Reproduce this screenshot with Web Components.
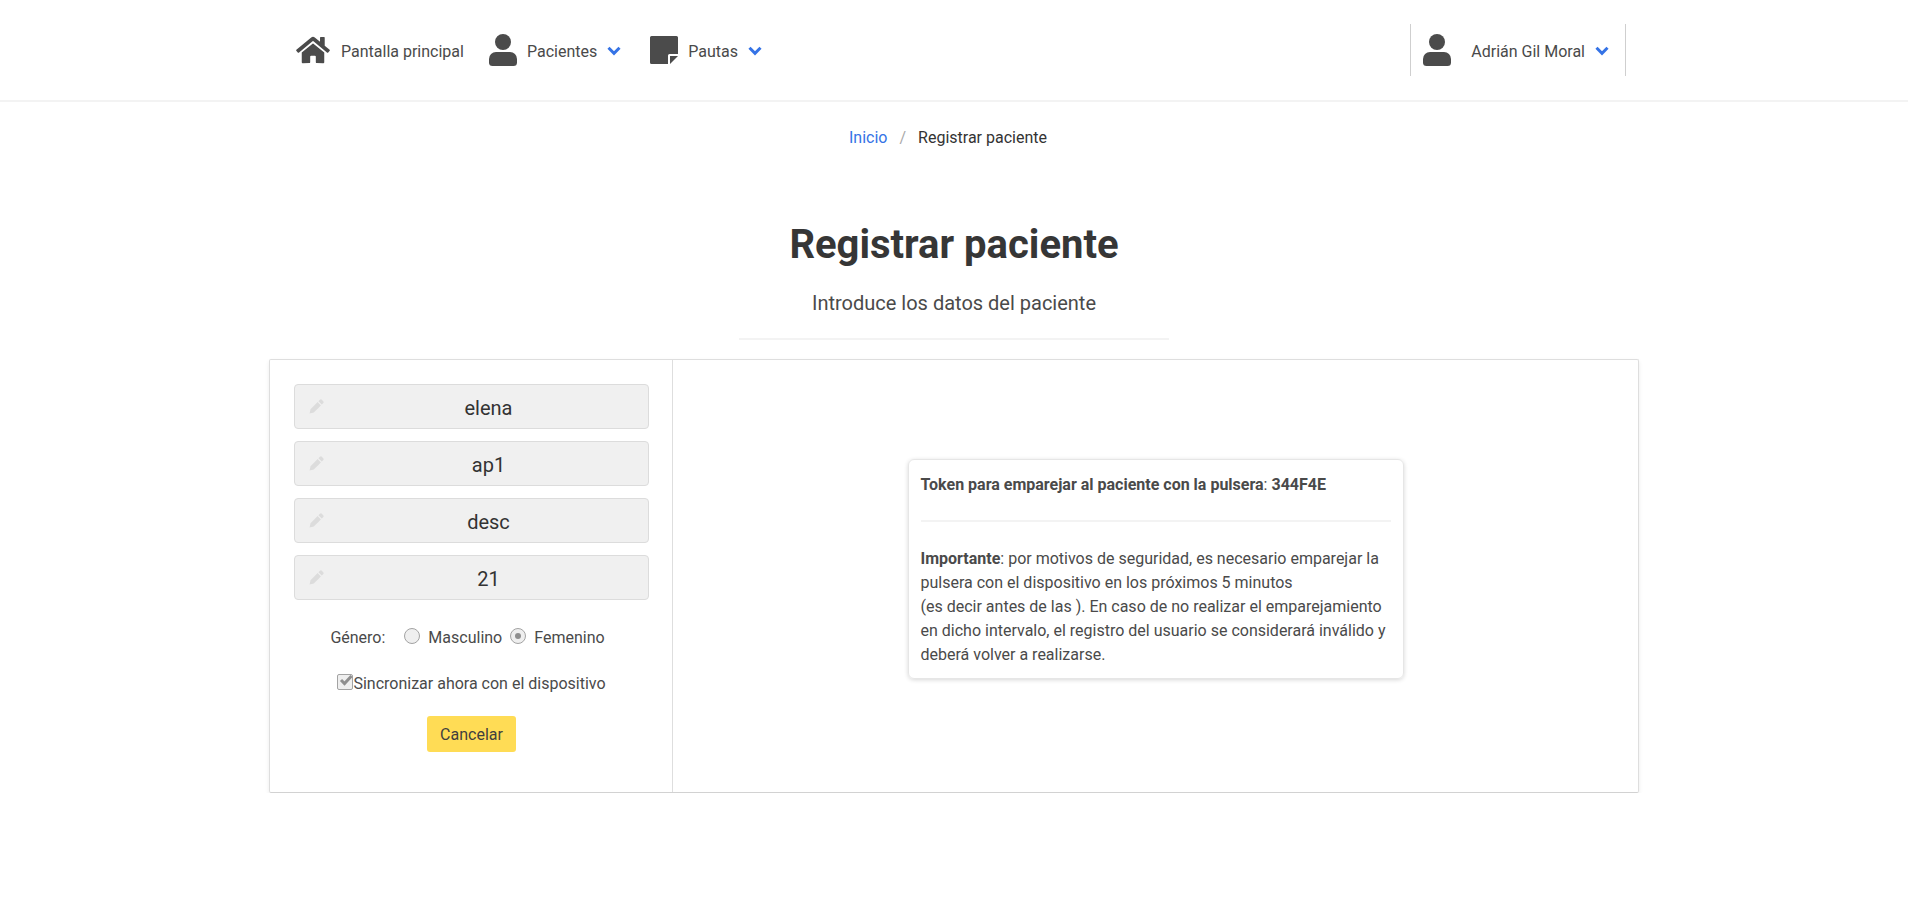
<!DOCTYPE html>
<html>
<head>
<meta charset="utf-8">
<title>Registrar paciente</title>
<style>
  html, body { margin: 0; padding: 0; background: #fff; font-family: Roboto, sans-serif; color: #3c3c3c; }
</style>
</head>
<body>
<app-nav>
  <nav-item icon="home">Pantalla principal</nav-item>
  <nav-item icon="user" menu>Pacientes</nav-item>
  <nav-item icon="note" menu>Pautas</nav-item>
  <nav-item slot="right" icon="user" menu wide>Adrián Gil Moral</nav-item>
</app-nav>
<bread-crumb></bread-crumb>
<page-title head="Registrar paciente" sub="Introduce los datos del paciente"></page-title>
<register-card>
  <patient-form slot="left"></patient-form>
  <token-info slot="right"></token-info>
</register-card>

<script>
  const ICONS = {
    home: `<svg width="36" height="30" viewBox="0 0 576 512"><path fill="#4b4b4b" d="M280.4 148.3 96 300.1V464a16 16 0 0 0 16 16l112-.3a16 16 0 0 0 16-16V368a16 16 0 0 1 16-16h64a16 16 0 0 1 16 16v95.6a16 16 0 0 0 16 16.1l112 .3a16 16 0 0 0 16-16V300L295.700 148.300a12.200 12.200 0 0 0-15.300 0zM571.600 251.500 488 182.600V44a12 12 0 0 0-12-12h-56a12 12 0 0 0-12 12v72.600L318.500 43a48 48 0 0 0-61 0L4.300 251.500a12 12 0 0 0-1.600 16.900l25.500 31A12 12 0 0 0 45.200 301l235.200-193.700a12.200 12.200 0 0 1 15.300 0L530.900 301a12 12 0 0 0 16.900-1.600l25.500-31a12 12 0 0 0-1.700-16.900z"/></svg>`,
    user: `<svg width="28" height="32" viewBox="0 0 28 32"><circle cx="14" cy="8" r="8" fill="#4b4b4b"/><path fill="#4b4b4b" d="M7 18h14a7 7 0 0 1 7 7v3.500a3.500 3.500 0 0 1-3.500 3.500h-21A3.500 3.500 0 0 1 0 28.500V25a7 7 0 0 1 7-7z"/></svg>`,
    note: `<svg width="28" height="28" viewBox="0 0 28 28"><path fill="#4b4b4b" d="M1.500 0h25A1.500 1.500 0 0 1 28 1.500V18H19.500A1.500 1.500 0 0 0 18 19.500V28H1.500A1.500 1.500 0 0 1 0 26.500v-25A1.500 1.500 0 0 1 1.500 0z"/><path fill="#4b4b4b" d="M20 20h8l-8 8z"/></svg>`
  }

  class AppNav extends HTMLElement {
    constructor() {
      super()
      this.attachShadow({ mode: 'open' })
      this.shadowRoot.innerHTML = `
      <style>
        :host { display: block; height: 100px; border-bottom: 2px solid #f3f3f3; }
        .bar { height: 100px; display: flex; align-items: center; justify-content: space-between; padding: 0 282px 0 295px; }
        .left { display: flex; align-items: center; gap: 25px; }
        .right { display: flex; align-items: center; height: 52px; border-left: 1px solid #cfcfcf; border-right: 1px solid #cfcfcf; padding: 0 16px 0 12px; }
      </style>
      <div class="bar">
        <div class="left"><slot></slot></div>
        <div class="right"><slot name="right"></slot></div>
      </div>`
    }
  }

  class NavItem extends HTMLElement {
    constructor() {
      super()
      this.attachShadow({ mode: 'open' })
      const menu = this.hasAttribute('menu')
      this.shadowRoot.innerHTML = `
      <style>
        :host { display: flex; align-items: center; font-size: 16px; color: #4a4a4a; white-space: nowrap; }
        .icon { display: flex; margin-right: 10px; }
        :host([wide]) .icon { margin-right: 20px; }
        .label { padding-top: 2px; }
        .chev { display: flex; margin: 2px 4px 0 10px; }
        :host([wide]) .chev { margin-right: 0; }
      </style>
      <span class="icon">${ICONS[this.getAttribute('icon')]}</span>
      <span class="label"><slot></slot></span>
      ${menu ? `<span class="chev"><svg width="14" height="10" viewBox="0 0 14 10"><path d="M1.500 1.800 7 7.300 12.500 1.800" fill="none" stroke="#3573e6" stroke-width="3"/></svg></span>` : ''}`
    }
  }

  class BreadCrumb extends HTMLElement {
    constructor() {
      super()
      this.attachShadow({ mode: 'open' })
      this.shadowRoot.innerHTML = `
      <style>
        :host { display: flex; justify-content: center; align-items: center; height: 24px; margin-top: 23px; padding-right: 12px; font-size: 16px; color: #333; }
        a { color: #3573e6; text-decoration: none; }
        i { font-style: normal; color: #aaa; margin: 0 12px; }
      </style>
      <a>Inicio</a><i>/</i><span>Registrar paciente</span>`
    }
  }

  class PageTitle extends HTMLElement {
    constructor() {
      super()
      this.attachShadow({ mode: 'open' })
      this.shadowRoot.innerHTML = `
      <style>
        :host { display: block; text-align: center; margin-top: 72px; }
        h1 { margin: 0; font-size: 40px; line-height: 48px; font-weight: 700; color: #363636; }
        p { margin: 21px 0 0; font-size: 20px; line-height: 26px; color: #4a4a4a; }
        hr { width: 430px; height: 2px; margin: 22px auto 0; border: 0; background: #f3f3f3; }
      </style>
      <h1>${this.getAttribute('head')}</h1>
      <p>${this.getAttribute('sub')}</p>
      <hr>`
    }
  }

  class RegisterCard extends HTMLElement {
    constructor() {
      super()
      this.attachShadow({ mode: 'open' })
      this.shadowRoot.innerHTML = `
      <style>
        :host { display: flex; width: 1370px; height: 434px; margin: 19px 0 0 269px; box-sizing: border-box; border: 1px solid #dedede; border-bottom-color: #d2d2d2; border-radius: 2px; box-shadow: 0 2px 4px rgba(0,0,0,.08); }
        .left { width: 403px; box-sizing: border-box; border-right: 1px solid #dedede; }
        .right { flex: 1; display: flex; align-items: center; justify-content: center; padding-bottom: 14px; }
      </style>
      <div class="left"><slot name="left"></slot></div>
      <div class="right"><slot name="right"></slot></div>`
    }
  }

  class FieldBox extends HTMLElement {
    constructor() {
      super()
      this.attachShadow({ mode: 'open' })
      this.shadowRoot.innerHTML = `
      <style>
        :host { display: flex; align-items: center; justify-content: center; position: relative; height: 45px; box-sizing: border-box; background: #f0f0f0; border: 1px solid #dcdcdc; border-radius: 4px; font-size: 20px; color: #333; padding: 3px 0 0 34px; }
        svg { position: absolute; left: 14px; top: 14px; }
      </style>
      <svg width="15" height="15" viewBox="0 0 16 16"><path fill="#dcdcdc" d="M11.600.9a1.500 1.500 0 0 1 2.100 0l1.400 1.400a1.500 1.500 0 0 1 0 2.100l-1.500 1.500-3.500-3.500zM9.200 3.300l3.500 3.500-7.600 7.600L.6 15.400l1-4.500z"/></svg>
      <slot></slot>`
    }
  }

  class PatientForm extends HTMLElement {
    constructor() {
      super()
      this.attachShadow({ mode: 'open' })
      this.shadowRoot.innerHTML = `
      <style>
        :host { display: block; padding: 24px 23px 0 24px; font-size: 16px; color: #4a4a4a; }
        .fields { display: flex; flex-direction: column; gap: 12px; }
        .gender { display: flex; align-items: center; justify-content: center; height: 24px; margin-top: 25px; padding-right: 8px; }
        .radio { width: 14px; height: 14px; border: 1px solid #a3a3a3; border-radius: 50%; background: #efefef; display: flex; align-items: center; justify-content: center; margin: -2px 8px 0 0; }
        .radio.on::after { content: ""; width: 6px; height: 6px; border-radius: 50%; background: #8f8f8f; }
        .sp { margin-right: 19px; }
        .sp2 { margin-right: 8px; }
        .sync { display: flex; align-items: center; justify-content: center; height: 24px; margin-top: 22px; }
        .check { width: 14px; height: 14px; border: 1px solid #a3a3a3; border-radius: 2px; background: #efefef; position: relative; top: -1px; }
        .check svg { display: block; position: absolute; left: 1px; top: -1px; }
        .actions { display: flex; justify-content: center; margin-top: 21px; }
        button { width: 89px; height: 36px; border: 0; border-radius: 3px; background: #ffdc55; font: inherit; color: #3f3f3f; padding: 0; }
      </style>
      <div class="fields">
        <field-box>elena</field-box>
        <field-box>ap1</field-box>
        <field-box>desc</field-box>
        <field-box>21</field-box>
      </div>
      <div class="gender">
        <span class="sp">Género:</span>
        <span class="radio"></span><span class="sp2">Masculino</span>
        <span class="radio on"></span><span>Femenino</span>
      </div>
      <div class="sync">
        <span class="check"><svg width="14" height="13" viewBox="0 0 14 13"><path d="M2 6 5.500 9.500 12.500 2" fill="none" stroke="#8f8f8f" stroke-width="3"/></svg></span><span>Sincronizar ahora con el dispositivo</span>
      </div>
      <div class="actions"><button>Cancelar</button></div>`
    }
  }

  class TokenInfo extends HTMLElement {
    constructor() {
      super()
      this.attachShadow({ mode: 'open' })
      this.shadowRoot.innerHTML = `
      <style>
        :host { display: block; width: 496px; height: 220px; box-sizing: border-box; padding: 13px 12px 0 12px; border: 1px solid #e6e6e6; border-radius: 6px; box-shadow: 0 1px 4px rgba(0,0,0,.16); font-size: 16px; line-height: 24px; color: #4a4a4a; }
        p { margin: 0; }
        hr { height: 2px; border: 0; background: #f3f3f3; margin: 23px 0 25px; }
      </style>
      <p><b>Token para emparejar al paciente con la pulsera</b>: <b>344F4E</b></p>
      <hr>
      <p><b>Importante</b>: por motivos de seguridad, es necesario emparejar la pulsera con el dispositivo en los próximos 5 minutos<br>(es decir antes de las ). En caso de no realizar el emparejamiento en dicho intervalo, el registro del usuario se considerará inválido y deberá volver a realizarse.</p>`
    }
  }

  customElements.define('app-nav', AppNav)
  customElements.define('nav-item', NavItem)
  customElements.define('bread-crumb', BreadCrumb)
  customElements.define('page-title', PageTitle)
  customElements.define('register-card', RegisterCard)
  customElements.define('field-box', FieldBox)
  customElements.define('patient-form', PatientForm)
  customElements.define('token-info', TokenInfo)
</script>
</body>
</html>
